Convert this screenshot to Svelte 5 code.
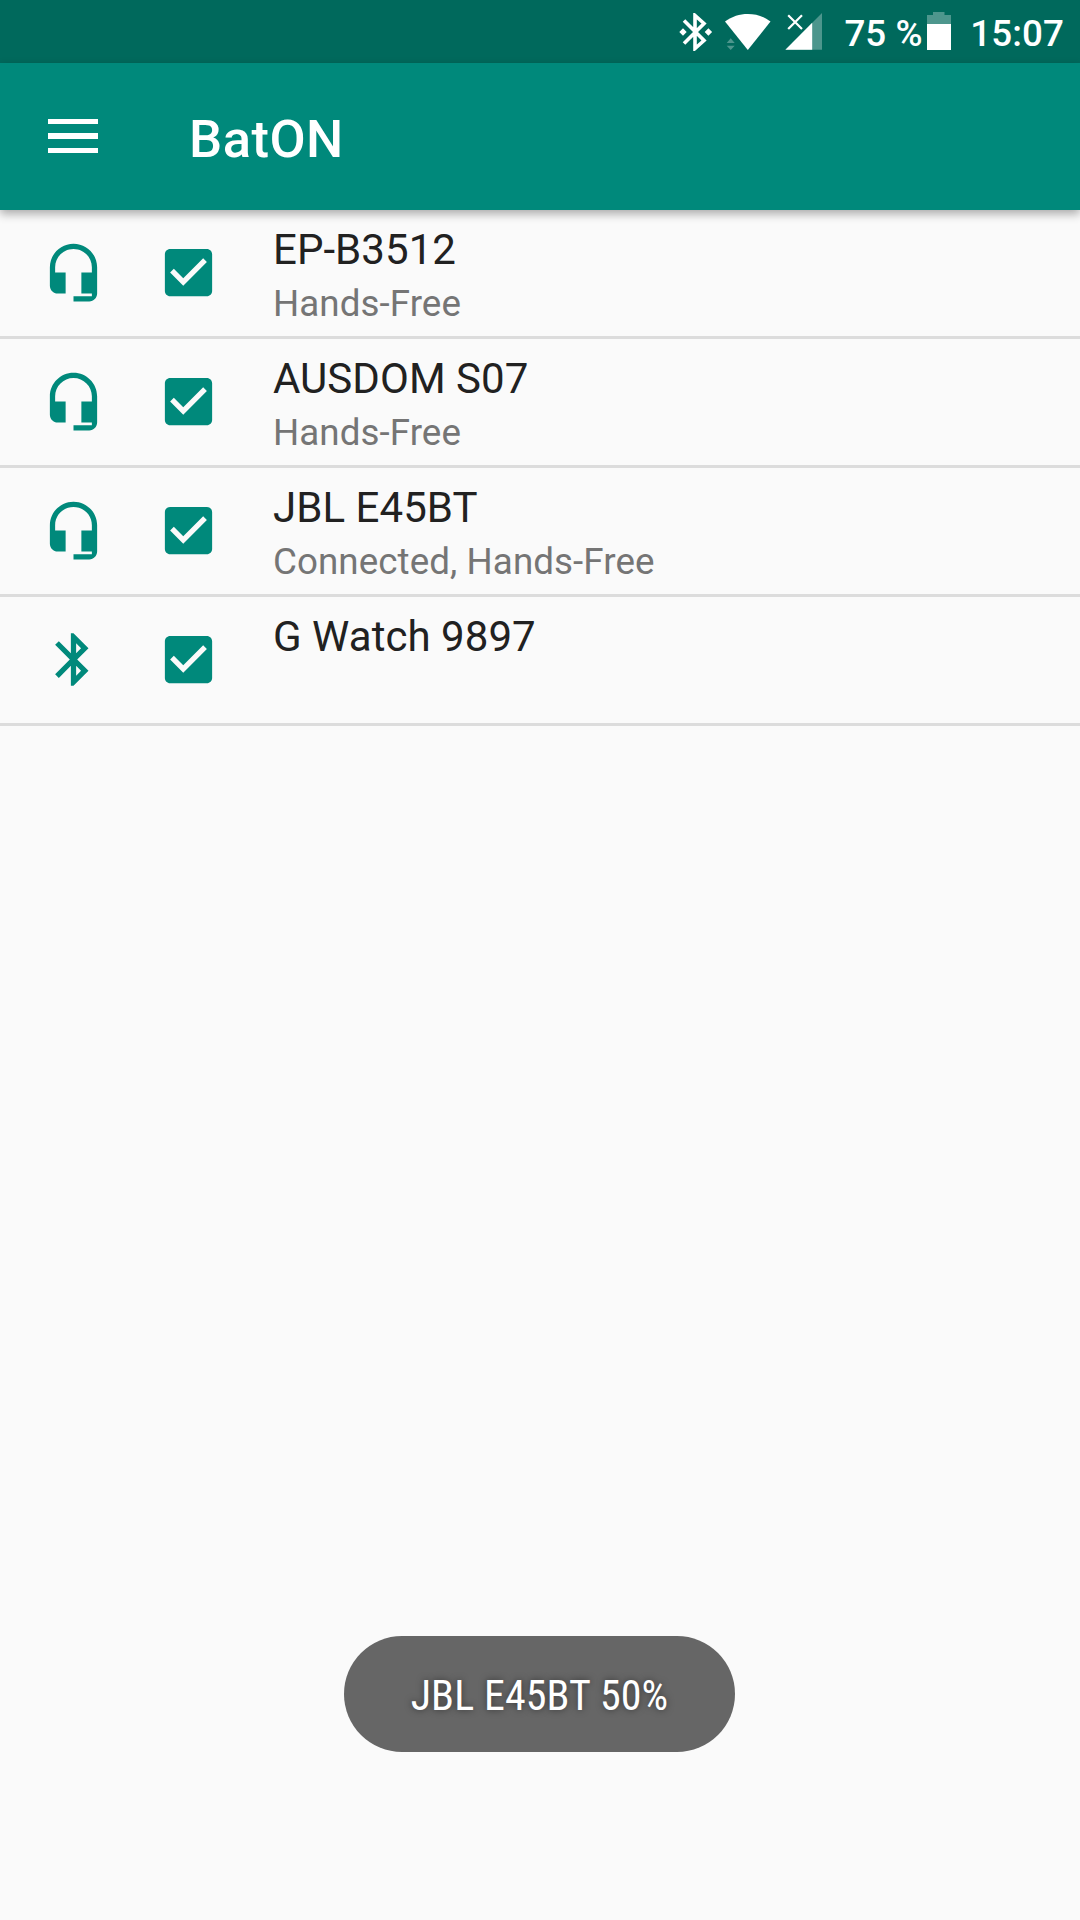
<script>
  let battery = 75;
  let time = '15:07';

  let devices = [
    { name: 'EP-B3512', status: 'Hands-Free', type: 'headset', checked: true },
    { name: 'AUSDOM S07', status: 'Hands-Free', type: 'headset', checked: true },
    { name: 'JBL E45BT', status: 'Connected, Hands-Free', type: 'headset', checked: true },
    { name: 'G Watch 9897', status: '', type: 'bluetooth', checked: true }
  ];

  const icons = {
    headset: 'M12 1c-4.97 0-9 4.03-9 9v7c0 1.66 1.34 3 3 3h3v-8H5v-2c0-3.87 3.13-7 7-7s7 3.13 7 7v2h-4v8h4v1h-7v2h6c1.66 0 3-1.34 3-3V10c0-4.97-4.03-9-9-9z',
    bluetooth: 'M17.71 7.71L12 2h-1v7.59L6.41 5 5 6.41 10.59 12 5 17.59 6.41 19 11 14.41V22h1l5.71-5.71-4.3-4.29 4.3-4.29zM13 5.83l1.88 1.88L13 9.59V5.83zm1.88 10.46L13 18.17v-3.76l1.88 1.88z',
    checked: 'M19 3H5c-1.11 0-2 .9-2 2v14c0 1.1.89 2 2 2h14c1.11 0 2-.9 2-2V5c0-1.1-.89-2-2-2zm-9 14l-5-5 1.41-1.41L10 14.17l7.59-7.59L19 8l-9 9z',
    unchecked: 'M19 5v14H5V5h14m0-2H5c-1.1 0-2 .9-2 2v14c0 1.1.9 2 2 2h14c1.1 0 2-.9 2-2V5c0-1.1-.9-2-2-2z'
  };

  function toggle(i) {
    devices[i].checked = !devices[i].checked;
  }
</script>

<div class="screen">
  <div class="status-bar">
    <svg class="bt" viewBox="0 0 34 38" width="34" height="38">
      <path d="M5 7.5L25 27.5L16 35.5V2.5L25 10.5L5 30.5" fill="none" stroke="#fff" stroke-width="3.6" />
      <path d="M4 15.2l3.7 3.8L4 22.8.3 19zM29.4 15.2l3.7 3.8-3.7 3.8-3.7-3.8z" fill="#fff" />
    </svg>
    <svg class="wifi" viewBox="0 0 46 38" width="46" height="38">
      <path d="M0 8.6C7 3.2 14.5 .9 22.8 .9S38.5 3.2 45.5 8.6L22.8 37z" fill="#fff" />
      <path d="M5.7 25.3l4 4.7h-8zM1.7 32.7h8l-4 4.3z" fill="#fff" fill-opacity=".3" />
    </svg>
    <svg class="signal" viewBox="0 0 38 38" width="38" height="38">
      <path d="M37 0v36.7H.4z" fill="#fff" fill-opacity=".3" />
      <path d="M27.2 9.8v26.9H.4z" fill="#fff" />
      <path d="M3.2 2.2l13.8 13.8M17 2.2L3.2 16" stroke="#fff" stroke-width="2.2" />
    </svg>
    <span class="percent">{battery} %</span>
    <svg class="battery" viewBox="0 0 24 38" width="24" height="38">
      <path d="M6 0h11.5v3H24v9H0V3h6z" fill="#fff" fill-opacity=".3" />
      <path d="M0 12h24v26H0z" fill="#fff" />
    </svg>
    <span class="time">{time}</span>
  </div>

  <header>
    <button class="menu" aria-label="Menu">
      <span></span>
      <span></span>
      <span></span>
    </button>
    <h1>BatON</h1>
  </header>

  <ul>
    {#each devices as device, i}
      <li>
        <svg class="icon" viewBox="0 0 24 24"><path d={icons[device.type]} /></svg>
        <button class="check" aria-label={device.name} on:click={() => toggle(i)}>
          <svg class="icon" viewBox="0 0 24 24">
            <path d={device.checked ? icons.checked : icons.unchecked} />
          </svg>
        </button>
        <div class="info">
          <div class="name">{device.name}</div>
          <div class="status">{device.status}</div>
        </div>
      </li>
    {/each}
  </ul>

  <div class="toast"><span>JBL E45BT 50%</span></div>
</div>

<style>
  :global(body) {
    margin: 0;
    background: #fafafa;
  }

  .screen {
    position: relative;
    width: 1080px;
    height: 1920px;
    overflow: hidden;
    background: #fafafa;
    font-family: Roboto, sans-serif;
  }

  svg {
    display: block;
    flex: none;
  }

  button {
    padding: 0;
    border: 0;
    background: none;
  }

  .status-bar {
    display: flex;
    align-items: flex-start;
    justify-content: flex-end;
    box-sizing: border-box;
    height: 63px;
    padding: 12px 16px 0 0;
    background: #00695c;
    color: #fff;
    font-size: 36.75px;
    font-weight: 500;
    line-height: 44px;
    white-space: nowrap;
  }

  .bt {
    margin-top: 1px;
    margin-right: 12px;
  }

  .wifi,
  .signal {
    margin-top: 1px;
  }

  .wifi {
    margin-right: 14px;
  }

  .signal {
    margin-right: 21px;
  }

  .battery {
    margin-left: 4.5px;
    margin-right: 19px;
  }

  .percent,
  .time {
    letter-spacing: 0.1px;
  }

  header {
    position: relative;
    display: flex;
    align-items: center;
    height: 147px;
    padding-left: 48px;
    background: #00897b;
    box-shadow: 0 4px 9px rgba(0, 0, 0, 0.32);
  }

  .menu {
    display: flex;
    flex-direction: column;
    gap: 9px;
    width: 50px;
    margin-top: -1px;
    margin-right: 91px;
  }

  .menu span {
    height: 5.3px;
    background: #fff;
  }

  h1 {
    margin: 4px 0 0;
    color: #fff;
    font-size: 52.5px;
    font-weight: 500;
    line-height: 62px;
    letter-spacing: 0.5px;
  }

  ul {
    margin: 0;
    padding: 0;
    list-style: none;
  }

  li {
    display: flex;
    align-items: flex-start;
    height: 126px;
    padding-left: 42px;
    border-bottom: 3px solid #dcdcdc;
  }

  .icon {
    width: 63px;
    height: 63px;
    margin-top: 31px;
    fill: #00897b;
  }

  .check {
    margin-left: 52.4px;
  }

  .check .icon {
    margin-top: 31.4px;
  }

  .info {
    margin: 15px 0 0 52.6px;
  }

  .name {
    color: #212121;
    font-size: 42px;
    line-height: 50px;
    letter-spacing: 0.05px;
  }

  .status {
    margin-top: 7px;
    color: #757575;
    font-size: 36.75px;
    line-height: 44px;
    letter-spacing: 0.07px;
  }

  .toast {
    position: absolute;
    left: 344px;
    top: 1636px;
    display: flex;
    align-items: center;
    justify-content: center;
    box-sizing: border-box;
    width: 391px;
    height: 116px;
    padding-top: 2px;
    border-radius: 58px;
    background: #666;
    color: #fff;
    font-family: 'Roboto Condensed', Roboto, sans-serif;
    font-size: 42px;
    font-stretch: 75%;
    letter-spacing: 0.1px;
    white-space: nowrap;
    text-shadow: 0 0 7px rgba(0, 0, 0, 0.5);
  }
</style>
